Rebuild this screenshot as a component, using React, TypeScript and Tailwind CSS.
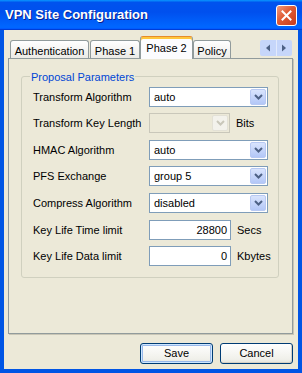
import React from 'react';

const font = "font-['Liberation_Sans',Arial,sans-serif]";

function Chevron({ color }: { color: string }) {
    return (
        <svg width="9" height="6" viewBox="0 0 9 6">
            <path d="M1 1 L4.5 4.5 L8 1" fill="none" stroke={color} strokeWidth="2" />
        </svg>
    );
}

function Select({ value }: { value: string }) {
    return (
        <div className="w-[119px] h-[20px] border border-[#7f9db9] bg-white flex items-center p-px">
            <span className="flex-1 pl-[3px] leading-none">{value}</span>
            <div className="w-[16px] h-[16px] rounded-[2px] border border-[#b8c9f3] bg-[linear-gradient(to_bottom,#d9e4fd,#b3c7f7)] flex items-center justify-center">
                <Chevron color="#4d6185" />
            </div>
        </div>
    );
}

function DisabledSelect() {
    return (
        <div className="w-[81px] h-[20px] border border-[#c9c7ba] bg-[#ece9d8] flex items-center p-px">
            <span className="flex-1" />
            <div className="w-[16px] h-[16px] rounded-[2px] border border-[#e3e1d6] bg-[#f3f2ec] flex items-center justify-center">
                <Chevron color="#c9c7ba" />
            </div>
        </div>
    );
}

function NumberField({ value }: { value: string }) {
    return (
        <div className="w-[82px] h-[20px] border border-[#7f9db9] bg-white flex items-center justify-end pr-[3px]">
            {value}
        </div>
    );
}

function Row({ label, className, children }: { label: string; className?: string; children: React.ReactNode }) {
    return (
        <div className={`flex items-center h-[20px] ${className ?? ''}`}>
            <div className="w-[116px]">{label}</div>
            {children}
        </div>
    );
}

export default function App() {
    const tabs = [
        { name: 'Authentication', w: 'w-[79px]', active: false, extra: '' },
        { name: 'Phase 1', w: 'w-[50px]', active: false, extra: 'ml-[1px]' },
        { name: 'Phase 2', w: 'w-[53px]', active: true, extra: '' },
        { name: 'Policy', w: 'w-[38px]', active: false, extra: '' },
    ];

    return (
        <div className={`w-[302px] h-[373px] flex flex-col bg-[#0055e5] text-[11px] text-black ${font}`}>
            {/* Title bar */}
            <div className="h-[30px] flex items-center pl-[5px] pr-[5px] bg-[linear-gradient(to_bottom,#0997ff_0%,#0053ee_8%,#0050ee_40%,#0066ff_88%,#0066ff_93%,#005bff_95%,#003dd7_96%,#003dd7_100%)]">
                <span className="flex-1 text-white font-bold text-[13px] [text-shadow:1px_1px_0_#0a1f8c]">
                    VPN Site Configuration
                </span>
                <div className="w-[21px] h-[21px] rounded-[3px] border border-white bg-[linear-gradient(135deg,#f09a7c,#e05a34_45%,#c83c1c)] flex items-center justify-center">
                    <svg width="11" height="11" viewBox="0 0 11 11">
                        <path d="M1.5 1.5 L9.5 9.5 M9.5 1.5 L1.5 9.5" stroke="white" strokeWidth="2" strokeLinecap="square" />
                    </svg>
                </div>
            </div>

            {/* Body */}
            <div className="flex-1 mx-[4px] mb-[4px] bg-[#ece9d8] flex flex-col pt-[7px] border-l border-[#ece9d8]">
                <div className="ml-[3px] mr-[5px] flex flex-col">
                    {/* Tabs */}
                    <div className="h-[21px] flex items-end pl-[2px]">
                        {tabs.map(tab => (
                            <div
                                key={tab.name}
                                className={`${tab.w} ${tab.extra} flex justify-center rounded-t-[3px] border border-b-0 ${tab.active
                                    ? 'h-[23px] -mb-[1px] relative z-10 bg-[#fcfcfe] border-[#919b9c] border-t-[#e68b2c] pt-[3px] shadow-[inset_0_1px_0_#ffc73c,inset_0_2px_0_#ffc73c]'
                                    : 'h-[18px] bg-[linear-gradient(to_bottom,#ffffff,#ecebe6)] border-[#919b9c] pt-[2px]'}`}
                            >
                                {tab.name}
                            </div>
                        ))}
                        <div className="ml-auto mr-[1px] self-start mt-[3px] w-[32px] h-[16px] flex bg-[#c6d6fa] rounded-[2px]">
                            <div className="flex-1 flex items-center justify-center border-r border-[#e2eafc]">
                                <svg width="6" height="8" viewBox="0 0 6 8"><path d="M5 0.5 L1 4 L5 7.5 Z" fill="#4d6185" /></svg>
                            </div>
                            <div className="flex-1 flex items-center justify-center">
                                <svg width="6" height="8" viewBox="0 0 6 8"><path d="M1 0.5 L5 4 L1 7.5 Z" fill="#4d6185" /></svg>
                            </div>
                        </div>
                    </div>

                    {/* Tab panel */}
                    <div className="h-[276px] border border-[#919b9c] bg-[#ece9d8] shadow-[1px_1px_0_#c9c6b6] pt-[17px] pl-[12px] pr-[13px]">
                        <div className="relative border border-[#d0d0bf] rounded-[3px] pt-[10px] pb-[11px] pl-[11px]">
                            <span className="absolute left-[8px] -top-[8px] px-[1px] bg-[#ece9d8] text-[#0046d5]">
                                Proposal Parameters
                            </span>
                            <Row label="Transform Algorithm">
                                <Select value="auto" />
                            </Row>
                            <Row label="Transform Key Length" className="mt-[6px]">
                                <DisabledSelect />
                                <span className="ml-[6px]">Bits</span>
                            </Row>
                            <Row label="HMAC Algorithm" className="mt-[7px]">
                                <Select value="auto" />
                            </Row>
                            <Row label="PFS Exchange" className="mt-[6px]">
                                <Select value="group 5" />
                            </Row>
                            <Row label="Compress Algorithm" className="mt-[7px]">
                                <Select value="disabled" />
                            </Row>
                            <Row label="Key Life Time limit" className="mt-[7px]">
                                <NumberField value="28800" />
                                <span className="ml-[6px]">Secs</span>
                            </Row>
                            <Row label="Key Life Data limit" className="mt-[6px]">
                                <NumberField value="0" />
                                <span className="ml-[6px]">Kbytes</span>
                            </Row>
                        </div>
                    </div>
                </div>

                {/* Buttons */}
                <div className="mt-[9px] flex justify-end gap-[7px] pr-[5px]">
                    <button className="w-[73px] h-[21px] rounded-[3px] border border-[#003c74] bg-[linear-gradient(to_bottom,#ffffff,#f0f0ea_80%,#e5e4dc)] shadow-[inset_0_0_0_1px_#cee7ff,inset_0_0_0_2px_#98b8ea]">
                        Save
                    </button>
                    <button className="w-[73px] h-[21px] rounded-[3px] border border-[#003c74] bg-[linear-gradient(to_bottom,#ffffff,#f0f0ea_80%,#e5e4dc)] shadow-[inset_-1px_-1px_0_#d6d0c5]">
                        Cancel
                    </button>
                </div>
            </div>
        </div>
    );
}
